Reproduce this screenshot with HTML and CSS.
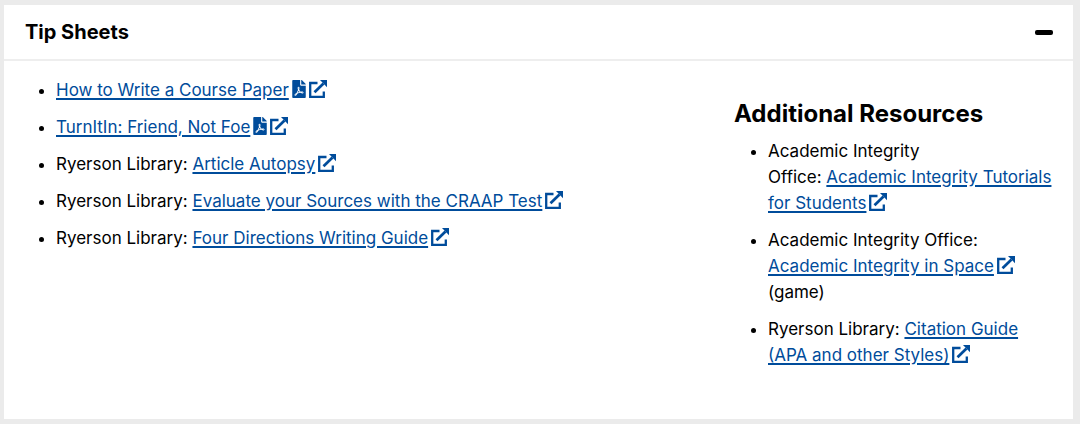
FILE: index.html
```html
<!DOCTYPE html>
<html lang="en">
<head>
  <meta charset="utf-8">
  <meta name="viewport" content="width=device-width, initial-scale=1">
  <title>Tip Sheets</title>
  <link rel="stylesheet" href="styles.css">
</head>
<body>
  <svg class="sprite" aria-hidden="true">
    <symbol id="external" viewBox="0 0 18 18">
      <path d="M8.5 3H1.2V16.8H14.8V11.5" fill="none" stroke="currentColor" stroke-width="2.3"/>
      <path d="M5.5 12.3L14.5 3.5" fill="none" stroke="currentColor" stroke-width="2.7"/>
      <path d="M11 0H18V7.2Z" fill="currentColor"/>
    </symbol>
    <symbol id="pdf" viewBox="0 0 384 512">
      <path fill="currentColor" d="M181.9 256.1c-5-16-4.9-46.9-2-46.9 8.4 0 7.6 36.9 2 46.9zm-1.7 47.2c-7.7 20.2-17.3 43.3-28.4 62.7 18.3-7 39-17.2 62.9-21.9-12.7-9.6-24.9-23.4-34.5-40.8zM86.1 428.1c0 .8 13.2-5.4 34.9-40.2-6.7 6.3-29.1 24.5-34.9 40.2zM248 160h136v328c0 13.3-10.7 24-24 24H24c-13.3 0-24-10.7-24-24V24C0 10.7 10.7 0 24 0h200v136c0 13.2 10.8 24 24 24zm-8 171.8c-20-12.2-33.3-29-42.7-53.8 4.5-18.5 11.6-46.6 6.2-64.2-4.7-29.4-42.4-26.5-47.8-6.8-5 18.3-.4 44.1 8.1 77-11.6 27.6-28.7 64.6-40.8 85.8-.1 0-.1.1-.2.1-27.1 13.9-73.6 44.5-54.5 68 5.6 6.9 16 10 21.5 10 17.9 0 35.7-18 61.1-61.8 25.8-8.5 54.1-19.1 79-23.2 21.7 11.8 47.1 19.5 64 19.5 29.2 0 31.2-32 19.7-43.4-13.9-13.6-54.3-9.7-73.6-7.2zM377 105L279 7c-4.5-4.5-10.6-7-17-7h-6v128h128v-6.1c0-6.3-2.5-12.4-7-16.9zm-74.1 255.3c4.1-2.7-2.5-11.9-42.8-9 37.1 15.8 42.8 9 42.8 9z"/>
    </symbol>
  </svg>

  <section class="panel">
    <header class="panel-header">
      <h2>Tip Sheets</h2>
      <button class="toggle" type="button" aria-expanded="true" aria-controls="tips" aria-label="Collapse"></button>
    </header>
    <div class="panel-body" id="tips">
      <ul class="links">
        <li><a href="#">How to Write a Course Paper</a><svg class="icon icon-pdf"><use href="#pdf"/></svg><svg class="icon"><use href="#external"/></svg></li>
        <li><a href="#">TurnItIn: Friend, Not Foe</a><svg class="icon icon-pdf"><use href="#pdf"/></svg><svg class="icon"><use href="#external"/></svg></li>
        <li>Ryerson Library: <a href="#">Article Autopsy</a><svg class="icon"><use href="#external"/></svg></li>
        <li>Ryerson Library: <a href="#">Evaluate your Sources with the CRAAP Test</a><svg class="icon"><use href="#external"/></svg></li>
        <li>Ryerson Library: <a href="#">Four Directions Writing Guide</a><svg class="icon"><use href="#external"/></svg></li>
      </ul>
      <aside class="resources">
        <h3>Additional Resources</h3>
        <ul class="links">
          <li>Academic Integrity Office:&nbsp;<a href="#">Academic Integrity Tutorials for Students</a><svg class="icon"><use href="#external"/></svg></li>
          <li>Academic Integrity Office: <a href="#">Academic Integrity in Space</a><svg class="icon"><use href="#external"/></svg> (game)</li>
          <li>Ryerson Library: <a href="#">Citation Guide (APA and other Styles)</a><svg class="icon"><use href="#external"/></svg></li>
        </ul>
      </aside>
    </div>
  </section>
</body>
</html>
```
FILE: styles.css
```css
* {
  box-sizing: border-box;
}
body {
  margin: 0;
  padding: 5px 7px 5px 4px;
  background-color: #ebebeb;
  color: #000;
  font-family: Inter, "Liberation Sans", sans-serif;
  font-size: 17px;
  line-height: 26px;
}
h2, h3, ul {
  margin: 0;
}
.sprite {
  display: none;
}
.panel {
  background-color: #fff;
}
.panel-header {
  display: flex;
  align-items: center;
  justify-content: space-between;
  padding: 14px 20px 14px 21px;
  border-bottom: 2px solid #eee;
}
.panel-header h2 {
  font-size: 20px;
  font-weight: 700;
}
.toggle {
  width: 18px;
  height: 5px;
  padding: 0;
  border: none;
  border-radius: 2px;
  background-color: #000;
  cursor: pointer;
}
.panel-body {
  display: grid;
  grid-template-columns: 2fr 1fr;
  gap: 71px;
  padding: 16px 20px 51px 21px;
}
.links {
  padding-left: 31px;
}
.links li {
  margin-bottom: 11px;
}
.links li:last-child {
  margin-bottom: 0;
}
.links a {
  color: #004c9b;
  text-decoration-thickness: 2px;
  text-underline-offset: 2px;
}
.icon {
  width: 18px;
  height: 18px;
  margin-left: 3px;
  vertical-align: -2px;
  color: #004c9b;
}
.icon-pdf {
  width: 14px;
}
.resources {
  padding-top: 24px;
}
.resources h3 {
  margin-bottom: 11px;
  font-size: 24px;
  font-weight: 700;
}
.resources .links {
  padding-left: 34px;
}
```
